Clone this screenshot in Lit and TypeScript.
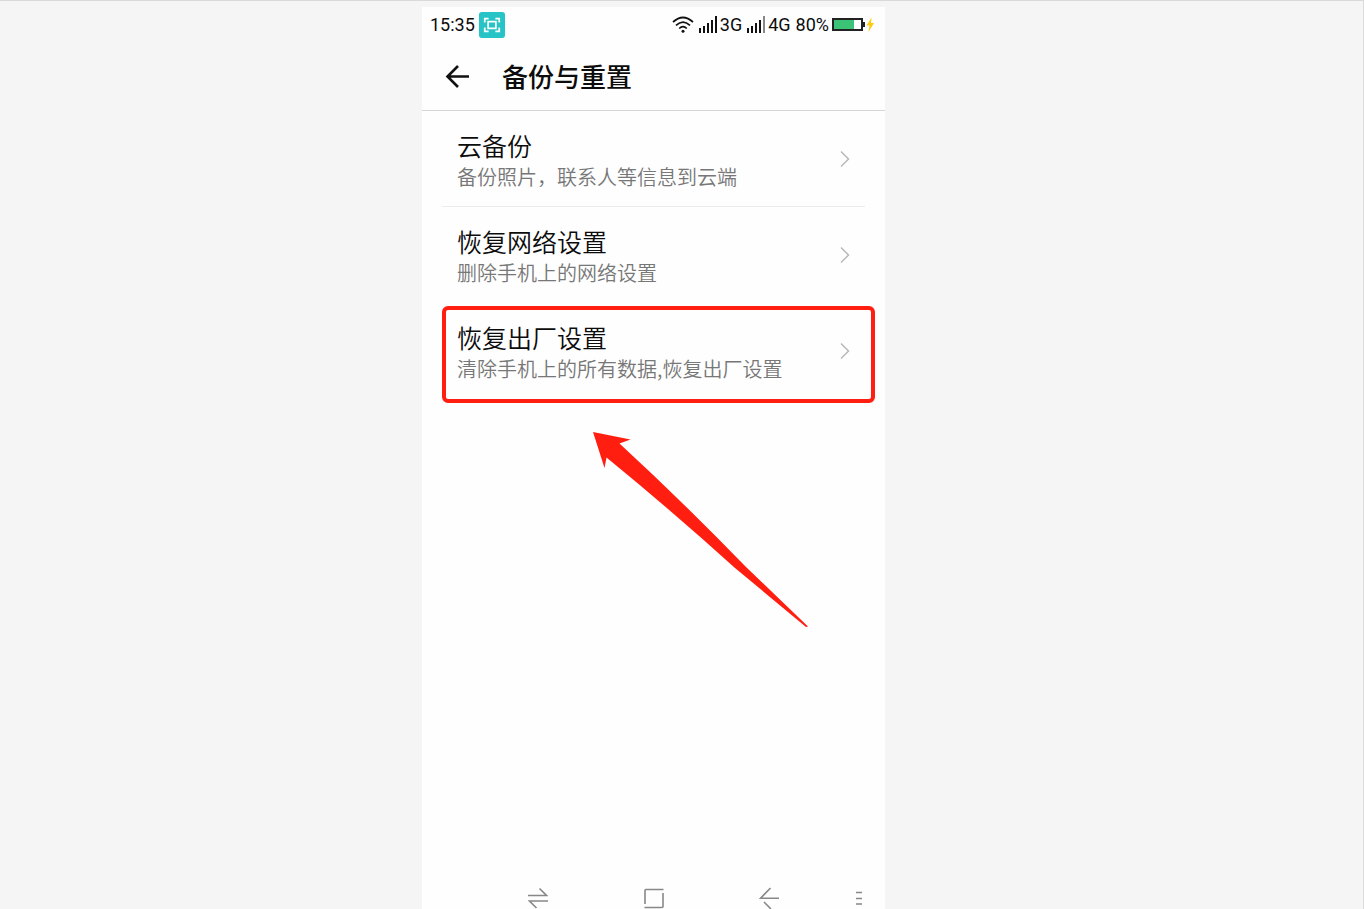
import { LitElement, html, css, svg } from "lit";
import { customElement } from "lit/decorators.js";

interface Entry {
  title: string;
  note: string;
  marked?: boolean;
}

const ENTRIES: Entry[] = [
  { title: "云备份", note: "备份照片，联系人等信息到云端" },
  { title: "恢复网络设置", note: "删除手机上的网络设置" },
  { title: "恢复出厂设置", note: "清除手机上的所有数据,恢复出厂设置", marked: true },
];

const signalBars = (lastColor: string) => html`
  <svg class="signal" width="21" height="18" viewBox="0 0 21 18" aria-hidden="true">
    ${[12, 10, 7, 4].map((y, i) => svg`<rect x=${i * 4} y=${y} width="2" height=${17 - y} fill="#111" />`)}
    <rect x="16" y="0" width="2" height="17" fill=${lastColor} />
  </svg>
`;

@customElement("app-root")
export class AppRoot extends LitElement {
  static styles = css`
    :host {
      display: block;
      font-family: Roboto, "Noto Sans CJK SC", sans-serif;
      color: #0c0c0c;
    }
    * {
      box-sizing: border-box;
    }
    svg {
      display: block;
      flex: none;
    }
    button {
      border: 0;
      padding: 0;
      background: none;
      color: inherit;
      font: inherit;
      cursor: pointer;
    }
    .page {
      display: flex;
      justify-content: center;
      height: 100vh;
      overflow: hidden;
      padding: 6px 56px 0 0;
      border-top: 1px solid #d9d9d9;
      border-right: 1px solid #dcdcdc;
      background: #f5f5f5;
    }
    .phone {
      position: relative;
      display: flex;
      flex-direction: column;
      width: 100%;
      max-width: 463px;
      background: #fefefe;
    }
    .status {
      display: flex;
      align-items: center;
      height: 35px;
      padding: 0 10px 0 8px;
      font-size: 18px;
      line-height: 20px;
    }
    .time {
      margin-right: 4px;
    }
    .indicators {
      display: flex;
      align-items: center;
      margin-left: auto;
    }
    .wifi {
      margin-right: 5px;
    }
    .net {
      display: flex;
      align-items: center;
      margin-right: 5px;
    }
    .battery {
      margin-left: 3px;
    }
    .header {
      display: flex;
      align-items: center;
      gap: 32px;
      height: 69px;
      padding: 0 23px;
      border-bottom: 1px solid #d6d6d6;
    }
    .header h1 {
      margin: 0;
      font-family: "Noto Sans CJK SC", sans-serif;
      font-size: 26px;
      font-weight: 500;
      line-height: 40px;
    }
    .list {
      list-style: none;
      margin: 0;
      padding: 0 20px;
      flex: 1;
    }
    .item {
      position: relative;
      border-bottom: 1px solid transparent;
    }
    .item:first-child {
      border-bottom-color: #ececec;
    }
    .row {
      display: flex;
      align-items: center;
      justify-content: space-between;
      width: 100%;
      height: 95px;
      padding: 0 15px;
      text-align: left;
      font-family: "Noto Sans CJK SC", sans-serif;
    }
    .text {
      padding-top: 6px;
    }
    .title,
    .note {
      display: block;
      font-weight: 350;
    }
    .title {
      font-size: 25px;
      line-height: 30px;
    }
    .note {
      font-size: 20px;
      line-height: 34px;
      color: #777;
    }
    .frame {
      position: absolute;
      inset: 3px -10px -5px 0;
      border: 4px solid #ff1e10;
      border-radius: 6px;
      pointer-events: none;
    }
    .pointer {
      position: absolute;
      top: 424px;
      left: 170px;
      pointer-events: none;
    }
    .nav {
      display: grid;
      grid-template-columns: 2fr 2fr 2fr 1fr;
      height: 22px;
      padding-left: 58px;
      color: #888;
    }
    .nav button {
      display: flex;
      justify-content: center;
    }
    .nav .more {
      padding-left: 6px;
    }
  `;

  render() {
    return html`
      <div class="page">
        <main class="phone">
          <div class="status">
            <span class="time">15:35</span>
            <svg width="26" height="26" viewBox="0 0 27 27" aria-hidden="true">
              <rect width="27" height="27" rx="3" fill="#27c4c7" />
              <g fill="none" stroke="#fff" stroke-width="1.800">
                <path d="M6 11V7h4M17 7h4v4M21 16v4h-4M10 20H6v-4" />
                <rect x="9.500" y="10" width="8" height="7" />
              </g>
            </svg>
            <div class="indicators">
              <svg class="wifi" width="22" height="18" viewBox="0 0 22 18" aria-hidden="true">
                <g fill="none" stroke="#111" stroke-width="1.700">
                  <path d="M1 6Q11-3 21 6M4 9.300q7-6.500 14 0M7.200 12.500q3.800-3.600 7.600 0" />
                </g>
                <circle cx="11" cy="15.300" r="1.500" fill="#111" />
              </svg>
              <span class="net">${signalBars("#111")}3G</span>
              <span class="net">${signalBars("#888")}4G</span>
              <span>80%</span>
              <svg class="battery" width="43" height="18" viewBox="0 0 43 18" aria-hidden="true">
                <rect x="1" y="3" width="29" height="11" fill="#fff" stroke="#222" stroke-width="2" />
                <rect x="2" y="4" width="20" height="9" fill="#3cc476" />
                <rect x="31" y="6" width="2" height="5" fill="#222" />
                <path d="M39.500 1.500L34.500 9.500h3l-1 6.500 5.500-9h-3z" fill="#ffc90e" />
              </svg>
            </div>
          </div>
          <header class="header">
            <button aria-label="返回">
              <svg width="25" height="24" viewBox="0 0 25 24" fill="none" stroke="#111" stroke-width="2.600">
                <path d="M24 12.500H2M13 2L2.500 12.500 13 23" />
              </svg>
            </button>
            <h1>备份与重置</h1>
          </header>
          <ul class="list">
            ${ENTRIES.map(
              (e) => html`
                <li class="item">
                  <button class="row">
                    <span class="text">
                      <span class="title">${e.title}</span>
                      <span class="note">${e.note}</span>
                    </span>
                    <svg width="11" height="18" viewBox="0 0 11 18" fill="none" stroke="#b8b8b8" stroke-width="1.500">
                      <path d="M2 1.500L9.500 9 2 16.500" />
                    </svg>
                  </button>
                  ${e.marked ? html`<span class="frame"></span>` : ""}
                </li>
              `
            )}
          </ul>
          <nav class="nav">
            <button aria-label="切换">
              <svg width="20" height="22" viewBox="0 0 20 22" fill="none" stroke="currentColor" stroke-width="1.600">
                <path d="M0 8.500h18.500L11.500 1.500M20 14H1.500l7 7" />
              </svg>
            </button>
            <button aria-label="主页">
              <svg width="20" height="22" viewBox="0 0 20 22" fill="none" stroke="currentColor" stroke-width="1.600">
                <path d="M1 17V3.500Q1 2.500 2 2.500H19.500M19 6V19.500Q19 20.500 18 20.500H.500" />
              </svg>
            </button>
            <button aria-label="后退">
              <svg width="20" height="22" viewBox="0 0 20 22" fill="none" stroke="currentColor" stroke-width="1.600">
                <path d="M11.500 1L1.500 11.300H20M5 15l7 7" />
              </svg>
            </button>
            <button class="more" aria-label="菜单">
              <svg width="8" height="22" viewBox="0 0 8 22" fill="none" stroke="currentColor" stroke-width="1.600">
                <path d="M1 5.500h6M1 11.500h6M1 17h6" />
              </svg>
            </button>
          </nav>
          <svg class="pointer" width="216" height="197" viewBox="0 0 216 197" aria-hidden="true">
            <path d="M1 1L38.500 8.500 27.500 12.500Q90 70 154 136L216 195.500 214 196 143 137Q80 80 14.500 26.500L12.500 37z" fill="#ff1e10" />
          </svg>
        </main>
      </div>
    `;
  }
}
